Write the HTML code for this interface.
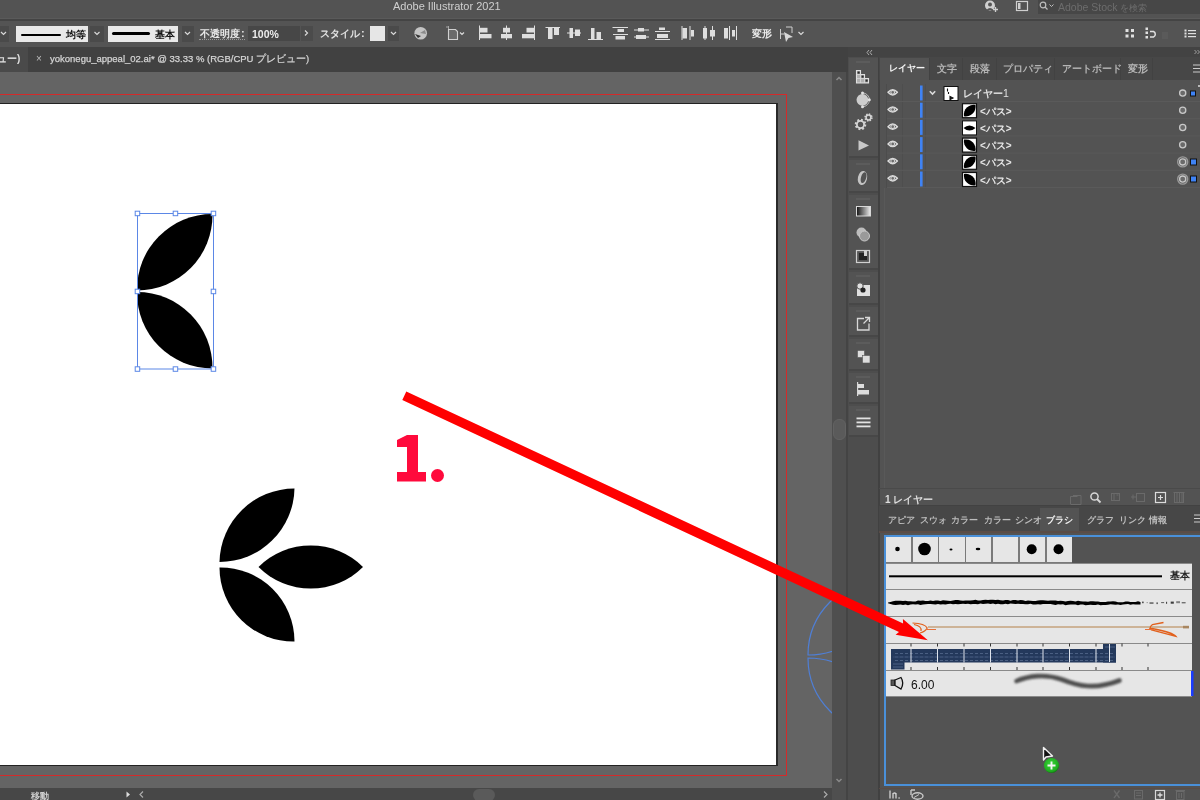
<!DOCTYPE html>
<html><head><meta charset="utf-8">
<style>
*{margin:0;padding:0;box-sizing:border-box}
html,body{width:1200px;height:800px;overflow:hidden;background:#535353;font-family:"Liberation Sans",sans-serif;}
.a{position:absolute}
.t{position:absolute;white-space:nowrap;color:#d6d6d6;font-size:10px;line-height:12px;will-change:transform}
</style></head><body>
<!-- title bar -->
<div class="a" style="left:0;top:0;width:1200px;height:19px;background:#535353;border-bottom:1px solid #5a5a5a"></div>
<div class="a" style="left:0;top:19px;width:1200px;height:2px;background:#444"></div>
<div class="t" style="left:393px;top:0px;font-size:11px;color:#cfcfcf">Adobe Illustrator 2021</div>
<!-- control bar -->
<div class="a" style="left:0;top:21px;width:1200px;height:26px;background:#545454"></div>

<!-- title right -->
<svg class="a" style="left:980px;top:0" width="60" height="18">
 <circle cx="10" cy="5.5" r="5" fill="#cfcfcf"/>
 <circle cx="10" cy="4.5" r="2" fill="#555"/>
 <path d="M6.5 10 Q10 6 13.5 10" fill="#555"/>
 <path d="M13 9.5h5M15.5 7v5" stroke="#cfcfcf" stroke-width="1.3"/>
 <rect x="36.5" y="1.5" width="11" height="9" fill="none" stroke="#cfcfcf" stroke-width="1.2"/>
 <rect x="38" y="3" width="2.5" height="6" fill="#cfcfcf"/>
</svg>
<div class="a" style="left:1038px;top:0;width:162px;height:14px;background:#474747"></div>
<svg class="a" style="left:1038px;top:0" width="20" height="14">
 <circle cx="5" cy="5" r="2.8" fill="none" stroke="#bdbdbd" stroke-width="1.2"/>
 <path d="M7 7l2.5 2.5" stroke="#bdbdbd" stroke-width="1.3"/>
 <path d="M11.5 4.5l2 2 2-2" fill="none" stroke="#bdbdbd" stroke-width="1"/>
</svg>
<div class="t" style="left:1058px;top:1px;font-size:10.5px;color:#6c6c6c">Adobe Stock <span style="font-size:9px">を検索</span></div>
<!-- control bar items -->
<div class="a" style="left:0;top:26px;width:9px;height:16px;background:#4a4a4a"></div>
<div class="a" style="left:16px;top:26px;width:72px;height:16px;background:#e9e9e9"></div>
<div class="a" style="left:21px;top:34px;width:40px;height:2.2px;background:#000;border-radius:1px"></div>
<div class="t" style="left:66px;top:29px;font-size:10px;font-weight:bold;color:#111">均等</div>
<div class="a" style="left:90px;top:26px;width:14px;height:16px;background:#4a4a4a"></div>
<div class="a" style="left:108px;top:26px;width:70px;height:16px;background:#e9e9e9"></div>
<div class="a" style="left:112px;top:32.2px;width:38px;height:3px;background:#000;border-radius:1.5px"></div>
<div class="t" style="left:155px;top:28.5px;font-size:10px;font-weight:bold;color:#111">基本</div>
<div class="a" style="left:182px;top:26px;width:12px;height:16px;background:#4a4a4a"></div>
<div class="t" style="left:199.5px;top:28px;font-size:9.7px;font-weight:bold;color:#e8e8e8;line-height:12px">不透明度</div><div class="a" style="left:199px;top:39px;width:46px;height:1px;border-top:1px dotted #999"></div><div class="t" style="left:240.5px;top:27px;font-size:11px;font-weight:bold;color:#e2e2e2">:</div>
<div class="a" style="left:248px;top:26px;width:52px;height:15px;background:#474747"></div>
<div class="t" style="left:252px;top:28px;font-size:10.5px;font-weight:bold;color:#ececec">100%</div>
<div class="a" style="left:301px;top:26px;width:12px;height:15px;background:#4b4b4b"></div>
<div class="t" style="left:320px;top:28px;font-size:9.7px;font-weight:bold;color:#e2e2e2">スタイル</div><div class="t" style="left:361px;top:27px;font-size:11px;font-weight:bold;color:#e2e2e2">:</div>
<div class="a" style="left:370px;top:26px;width:15px;height:15px;background:#e6e6e6"></div>
<div class="a" style="left:388px;top:26px;width:11px;height:15px;background:#4a4a4a"></div>
<div class="t" style="left:752px;top:28px;font-size:10px;font-weight:bold;color:#e8e8e8">変形</div>
<svg class="a" style="left:0;top:21px" width="1200" height="26">
 <g fill="none" stroke="#d8d8d8" stroke-width="1.2">
  <path d="M1 11l2.5 2.5 2.5-2.5"/>
  <path d="M94.5 11l2.5 2.5 2.5-2.5"/>
  <path d="M185 11l2.5 2.5 2.5-2.5"/>
  <path d="M305 9.5l2.5 2.5-2.5 2.5"/>
  <path d="M391 11l2.5 2.5 2.5-2.5"/>
  <path d="M460 11.5l2 2 2-2"/>
  <path d="M798.5 11l2.5 2.5 2.5-2.5"/>
 </g>
 <circle cx="420.7" cy="12.3" r="6.3" fill="#c4c4c4"/>
 <path d="M415 13 L418 17 L421 15 Z" fill="#333"/>
 <path d="M420 12 L425 9 L426 13Z" fill="#8a8a8a"/>
 <path d="M448.5 8.5h7l2 2v8h-9z" fill="#6a6a6a" stroke="#d0d0d0" stroke-width="1.1"/>
 <path d="M446 6h2M448.5 5v3" stroke="#bbb" stroke-width="0.8"/>
 <g fill="#dedede">
  <rect x="479" y="4.5" width="1" height="14.5"/><rect x="480" y="6.8" width="7.5" height="4.7"/><rect x="480" y="13" width="11.5" height="4.3"/>
  <rect x="506" y="4.5" width="1" height="14.5"/><rect x="503" y="6.8" width="7" height="4.7"/><rect x="501" y="13" width="11" height="4.3"/>
  <rect x="534" y="4.5" width="1" height="14.5"/><rect x="526.5" y="6.8" width="7.5" height="4.7"/><rect x="522" y="13" width="12" height="4.3"/>
  <rect x="545.5" y="6" width="14.5" height="1"/><rect x="548" y="7" width="4.5" height="11"/><rect x="554" y="7" width="5" height="7"/>
  <rect x="567" y="11.5" width="14" height="1"/><rect x="569.5" y="7" width="3.5" height="10"/><rect x="575" y="8.5" width="5" height="6.5"/>
  <rect x="588" y="18" width="15" height="1"/><rect x="591" y="7" width="3.5" height="11"/><rect x="596.5" y="11" width="4.5" height="7"/>
  <rect x="612.5" y="6" width="15.5" height="1"/><rect x="617.5" y="8" width="6.5" height="3"/><rect x="613" y="13" width="15" height="1"/><rect x="615.5" y="15" width="9.5" height="3.5"/>
  <rect x="634" y="8.5" width="15" height="1"/><rect x="638" y="7" width="6" height="3.5"/><rect x="634" y="15.5" width="15" height="1"/><rect x="636" y="14" width="10" height="4"/>
  <rect x="659" y="6.5" width="6" height="2.5"/><rect x="655" y="10" width="15" height="1"/><rect x="657" y="13" width="11" height="4"/><rect x="655" y="18" width="15" height="1"/>
  <rect x="681.5" y="5" width="1" height="14"/><rect x="682.5" y="7" width="4.5" height="10.5"/><rect x="689.5" y="5" width="1" height="14"/><rect x="691" y="9" width="3" height="6.5"/>
  <rect x="703" y="7" width="4" height="10.5"/><rect x="704.5" y="5" width="1" height="14"/><rect x="710" y="9" width="5" height="6.5"/><rect x="712" y="5" width="1" height="14"/>
  <rect x="724" y="7" width="4" height="10.5"/><rect x="729" y="5" width="1" height="14"/><rect x="732" y="9" width="3" height="6.5"/><rect x="736" y="5" width="1" height="14"/>
 </g>
 <path d="M780.5 8v10M780.5 13h4M786 6h6v6" fill="none" stroke="#cfcfcf" stroke-width="1"/>
 <path d="M784 11 L793 16 L788.5 17 L786 21 Z" fill="#d8d8d8"/>
 <g fill="#e0e0e0">
  <rect x="1125.5" y="8" width="3" height="3"/><rect x="1131" y="8" width="3" height="3"/><rect x="1125.5" y="13.5" width="3" height="3"/><rect x="1131" y="13.5" width="3" height="3"/>
  <rect x="1145.5" y="6.5" width="2.5" height="2.5"/><rect x="1145.5" y="10.5" width="2.5" height="2.5"/><rect x="1145.5" y="15" width="2.5" height="2.5"/>
  <rect x="1184.5" y="8.5" width="2" height="2"/><rect x="1184.5" y="11.5" width="2" height="2"/><rect x="1184.5" y="14.5" width="2" height="2"/>
  <rect x="1188" y="9" width="8" height="1.2"/><rect x="1188" y="12" width="8" height="1.2"/><rect x="1188" y="15" width="8" height="1.2"/>
 </g>
 <path d="M1150 10.5h3.5a3 3 0 0 1 0 5.5H1150" fill="none" stroke="#e0e0e0" stroke-width="1.5"/>
 <rect x="1162" y="11" width="6" height="7" fill="#5a5a5a"/>
</svg>

<!-- tab bar -->
<div class="a" style="left:0;top:47px;width:848px;height:25px;background:#414141"></div>
<div class="a" style="left:0;top:47px;width:28px;height:25px;background:#4a4a4a"></div>
<div class="t" style="left:-3px;top:53px;font-size:10px;font-weight:bold;color:#e0e0e0">ュー)</div>
<div class="t" style="left:36px;top:53px;color:#bdbdbd">×</div>
<div class="t" style="left:50px;top:53px;font-size:9.5px;color:#d4d4d4;-webkit-text-stroke:0.25px #d4d4d4">yokonegu_appeal_02.ai* @ 33.33 % (RGB/CPU プレビュー)</div>
<!-- canvas -->
<div class="a" style="left:0;top:72px;width:832px;height:716px;background:#646464"></div>
<div class="a" style="left:0;top:94px;width:787px;height:682px;border-right:1px solid #d42a2a;border-bottom:1px solid #d42a2a;border-top:1px solid #d42a2a"></div>
<div class="a" style="left:0;top:103px;width:778px;height:663px;background:#fff;border-top:1px solid #222;border-right:2px solid #2a2a2a;border-bottom:1px solid #222"></div>

<!-- artwork -->
<svg class="a" style="left:0;top:72px" width="832" height="716" viewBox="0 72 832 716">
 <g fill="#000">
  <path d="M137 290.5 A75.5 75.5 0 0 1 212.5 214 A75.5 75.5 0 0 1 137 290.5Z"/>
  <path d="M137 292 A75.5 75.5 0 0 0 212.5 368.5 A75.5 75.5 0 0 0 137 292Z"/>
  <path d="M219.5 562 A75 75 0 0 1 294.5 488.5 A75 75 0 0 1 219.5 562Z"/>
  <path d="M219.5 567.5 A74 74 0 0 0 294.5 641.5 A74 74 0 0 0 219.5 567.5Z"/>
  <path d="M258.5 567 A74 74 0 0 1 363 567 A74 74 0 0 1 258.5 567Z"/>
 </g>
 <g fill="none" stroke="#5b87e6" stroke-width="1">
  <rect x="137.5" y="213.5" width="76" height="155.5"/>
 </g>
 <g fill="#fff" stroke="#5b87e6" stroke-width="1">
  <rect x="135.2" y="211.2" width="4.5" height="4.5"/>
  <rect x="173.2" y="211.2" width="4.5" height="4.5"/>
  <rect x="211.2" y="211.2" width="4.5" height="4.5"/>
  <rect x="135.2" y="289.2" width="4.5" height="4.5"/>
  <rect x="211.2" y="289.2" width="4.5" height="4.5"/>
  <rect x="135.2" y="366.8" width="4.5" height="4.5"/>
  <rect x="173.2" y="366.8" width="4.5" height="4.5"/>
  <rect x="211.2" y="366.8" width="4.5" height="4.5"/>
 </g>
 <g fill="none" stroke="#4f7fd6" stroke-width="1.2">
  <path d="M808 655 A75 75 0 0 1 883 580 A75 75 0 0 1 808 655Z"/>
  <path d="M808 658 A75 75 0 0 0 883 733 A75 75 0 0 0 808 658Z"/>
 </g>
 <path d="M397 440 L407 435 L418 435 L418 472 L426 472 L426 481.5 L397 481.5 L397 472 L407 472 L407 447 L397 447 Z" fill="#ff0a3c"/>
 <circle cx="437.5" cy="475.5" r="6.5" fill="#ff0a3c"/>
</svg>

<!-- status bar -->
<div class="a" style="left:0;top:788px;width:832px;height:12px;background:#474747"></div>
<div class="t" style="left:31px;top:790px;font-size:9px;font-weight:bold;color:#cfcfcf">移動</div>
<div class="a" style="left:473px;top:789px;width:22px;height:12px;background:#5a5a5a;border-radius:6px"></div>
<svg class="a" style="left:120px;top:788px" width="728" height="12"><path d="M6.5 3.5 L10 6.5 L6.5 9.5Z" fill="#ddd"/><path d="M23 3.5 L20 6.5 L23 9.5" fill="none" stroke="#aaa" stroke-width="1.2"/><path d="M704 3.5 L707 6.5 L704 9.5" fill="none" stroke="#aaa" stroke-width="1.2"/></svg>
<!-- v scrollbar -->
<div class="a" style="left:832px;top:72px;width:15px;height:728px;background:#4f4f4f"></div>
<div class="a" style="left:846px;top:72px;width:2px;height:728px;background:#444"></div>
<div class="a" style="left:833px;top:419px;width:13px;height:21px;background:#5a5a5a;border-radius:6px;border:1px solid #626262"></div>
<svg class="a" style="left:832px;top:72px" width="15" height="716"><path d="M4.5 8 L7 5.5 L9.5 8" fill="none" stroke="#8a8a8a" stroke-width="1.5"/><path d="M4.5 707 L7 709.5 L9.5 707" fill="none" stroke="#8a8a8a" stroke-width="1.5"/></svg>
<!-- dock -->
<div class="a" style="left:848px;top:47px;width:352px;height:10px;background:#434343"></div><svg class="a" style="left:862px;top:48px" width="14" height="9"><path d="M7 2 L5 4.5 L7 7M10 2 L8 4.5 L10 7" fill="none" stroke="#aaa" stroke-width="1"/></svg>
<div class="a" style="left:879px;top:57px;width:321px;height:743px;background:#535353"></div>
<!-- tool column -->
<div class="a" style="left:848px;top:57px;width:31px;height:743px;background:#4d4d4d"></div>
<div class="a" style="left:849px;top:58px;width:29px;height:100px;background:#535353;border-bottom:2px solid #474747"></div>
<div class="a" style="left:856px;top:61px;width:14px;height:2px;background:#5c5c5c"></div>
<div class="a" style="left:849px;top:160px;width:29px;height:33px;background:#535353;border-bottom:2px solid #474747"></div>
<div class="a" style="left:856px;top:163px;width:14px;height:2px;background:#5c5c5c"></div>
<div class="a" style="left:849px;top:195px;width:29px;height:75px;background:#535353;border-bottom:2px solid #474747"></div>
<div class="a" style="left:856px;top:198px;width:14px;height:2px;background:#5c5c5c"></div>
<div class="a" style="left:849px;top:272px;width:29px;height:33px;background:#535353;border-bottom:2px solid #474747"></div>
<div class="a" style="left:856px;top:275px;width:14px;height:2px;background:#5c5c5c"></div>
<div class="a" style="left:849px;top:307px;width:29px;height:30px;background:#535353;border-bottom:2px solid #474747"></div>
<div class="a" style="left:856px;top:310px;width:14px;height:2px;background:#5c5c5c"></div>
<div class="a" style="left:849px;top:339px;width:29px;height:32px;background:#535353;border-bottom:2px solid #474747"></div>
<div class="a" style="left:856px;top:342px;width:14px;height:2px;background:#5c5c5c"></div>
<div class="a" style="left:849px;top:373px;width:29px;height:31px;background:#535353;border-bottom:2px solid #474747"></div>
<div class="a" style="left:856px;top:376px;width:14px;height:2px;background:#5c5c5c"></div>
<div class="a" style="left:849px;top:406px;width:29px;height:31px;background:#535353;border-bottom:2px solid #474747"></div>
<div class="a" style="left:856px;top:409px;width:14px;height:2px;background:#5c5c5c"></div>
<div class="a" style="left:878px;top:57px;width:2px;height:743px;background:#414141"></div><div class="a" style="left:884px;top:188px;width:1px;height:300px;background:#595959"></div>
<svg class="a" style="left:848px;top:57px" width="31" height="400" viewBox="848 57 31 400">
 <path d="M856.5 70.5h4v4h4v4h4v4.5h-12z" fill="#b0b0b0" stroke="#e0e0e0" stroke-width="1.1"/>
 <path d="M856.5 74.5h4M856.5 78.5h8M860.5 74.5v8.5M864.5 78.5v4.5" fill="none" stroke="#d8d8d8" stroke-width="0.8"/>
 <g fill="#2a2a2a"><rect x="857.5" y="71.5" width="2.2" height="2.2"/><rect x="861.5" y="75.5" width="2.2" height="2.2"/><rect x="865.5" y="79.5" width="2.2" height="2.2"/></g>
 <circle cx="862.4" cy="99.8" r="5.9" fill="#cdcdcd"/>
 <path d="M862.5 92.9 A6.9 6.9 0 0 1 862.5 106.7" fill="none" stroke="#bdbdbd" stroke-width="1"/>
 <circle cx="862.5" cy="92.9" r="1.5" fill="#e0e0e0"/><circle cx="869.3" cy="99.8" r="1.5" fill="#e0e0e0"/><circle cx="862.5" cy="106.7" r="1.5" fill="#e0e0e0"/>
 <circle cx="860.5" cy="124.5" r="4.6" fill="none" stroke="#d4d4d4" stroke-width="2.4" stroke-dasharray="1.8 1.8"/>
 <circle cx="860.5" cy="124.5" r="3.6" fill="none" stroke="#d4d4d4" stroke-width="1.8"/>
 <circle cx="868.5" cy="117.5" r="3.2" fill="none" stroke="#d4d4d4" stroke-width="2" stroke-dasharray="1.4 1.1"/>
 <circle cx="868.5" cy="117.5" r="2.4" fill="none" stroke="#d4d4d4" stroke-width="1.5"/>
 <path d="M858.5 140.3 L869 145.4 L858.5 150.5Z" fill="#c8c8c8"/>
 <ellipse cx="862.5" cy="178" rx="4.6" ry="7.2" fill="#c4c4c4" transform="rotate(12 862.5 178)"/><ellipse cx="863.6" cy="177.6" rx="2.6" ry="5.6" fill="#535353" transform="rotate(16 863.6 177.6)"/>
 <defs><linearGradient id="gr" x1="0" x2="1"><stop offset="0" stop-color="#111"/><stop offset="1" stop-color="#eee"/></linearGradient></defs>
 <rect x="856.5" y="206.5" width="14" height="9.5" fill="url(#gr)" stroke="#d8d8d8" stroke-width="1"/>
 <circle cx="861.5" cy="232.5" r="5" fill="#bdbdbd"/><circle cx="864.5" cy="236" r="5" fill="#9a9a9a" stroke="#c8c8c8" stroke-width="1"/>
 <rect x="856.5" y="250.5" width="13" height="12" fill="#555" stroke="#d0d0d0" stroke-width="1.2"/>
 <rect x="859" y="253" width="8" height="7" fill="#222"/><rect x="864" y="251" width="3" height="5" fill="#d0d0d0"/>
 <rect x="857" y="285" width="13" height="11" fill="#e0e0e0"/>
 <circle cx="860" cy="286" r="3.2" fill="#e0e0e0" stroke="#505050" stroke-width="1"/>
 <circle cx="863" cy="290" r="2.6" fill="#222"/>
 <path d="M864 318.5h-6.5v11.5h11.5v-6.5M863.5 323.5l5.5-5.5M865 317.5h4.5v4.5" fill="none" stroke="#d8d8d8" stroke-width="1.3"/>
 <rect x="857.5" y="350.5" width="7" height="7" fill="#ddd" stroke="#555" stroke-width="0.6"/>
 <rect x="862.5" y="355.5" width="7.5" height="7.5" fill="#ddd" stroke="#555" stroke-width="0.6"/>
 <rect x="857" y="382" width="1.2" height="14" fill="#d8d8d8"/><rect x="858" y="384" width="6" height="4" fill="#ddd"/><rect x="858" y="390" width="11" height="4.5" fill="#ddd"/>
 <rect x="856.5" y="417.5" width="14" height="1.8" fill="#e2e2e2"/><rect x="856.5" y="421.5" width="14" height="1.8" fill="#e2e2e2"/><rect x="856.5" y="425.5" width="14" height="1.8" fill="#e2e2e2"/>
</svg>
<!-- layers panel -->
<div class="a" style="left:879px;top:57px;width:321px;height:23px;background:#474747"></div>
<div class="a" style="left:880px;top:58px;width:49px;height:22px;background:#535353"></div>
<div class="a" style="left:929px;top:58px;width:1px;height:22px;background:#424242"></div>
<div class="a" style="left:962px;top:58px;width:1px;height:22px;background:#424242"></div>
<div class="a" style="left:996px;top:58px;width:1px;height:22px;background:#424242"></div>
<div class="a" style="left:1054px;top:58px;width:1px;height:22px;background:#424242"></div>
<div class="a" style="left:1120px;top:58px;width:1px;height:22px;background:#424242"></div>
<div class="a" style="left:1152px;top:58px;width:1px;height:22px;background:#424242"></div>
<div class="t" style="left:888.5px;top:62px;font-size:9px;font-weight:bold;color:#f4f4f4">レイヤー</div>
<div class="t" style="left:937px;top:62.5px;font-size:9.5px;font-weight:bold;color:#b4b4b4">文字</div>
<div class="t" style="left:970px;top:62.5px;font-size:9.5px;font-weight:bold;color:#b4b4b4">段落</div>
<div class="t" style="left:1003px;top:62.5px;font-size:9.5px;font-weight:bold;color:#b4b4b4">プロパティ</div>
<div class="t" style="left:1062px;top:62.5px;font-size:9.5px;font-weight:bold;color:#b4b4b4">アートボード</div>
<div class="t" style="left:1128px;top:62.5px;font-size:9.5px;font-weight:bold;color:#b4b4b4">変形</div>
<svg class="a" style="left:1180px;top:44px" width="20" height="36"><path d="M14.5 6l2 2-2 2M17.5 6l2 2-2 2" fill="none" stroke="#a0a0a0" stroke-width="1"/><path d="M13 21h7M13 24.5h7M13 28h7" stroke="#ccc" stroke-width="1.2"/></svg>
<div class="a" style="left:886px;top:84px;width:1px;height:104px;background:#4c4c4c"></div>
<div class="a" style="left:902px;top:84px;width:1px;height:104px;background:#4e4e4e"></div>
<div class="a" style="left:925px;top:84px;width:1px;height:104px;background:#4e4e4e"></div>
<svg class="a" style="left:879px;top:80px" width="321" height="112" viewBox="879 80 321 112">
<line x1="887" x2="1200" y1="101.5" y2="101.5" stroke="#5a5a5a" stroke-width="1"/>
<path d="M888 92.3 Q892.7 87.1 897.4 92.3 Q892.7 97.5 888 92.3Z" fill="none" stroke="#dcdcdc" stroke-width="1.5" stroke-linejoin="round"/>
<circle cx="892.7" cy="92.3" r="1.9" fill="#6a6a6a" stroke="#d4d4d4" stroke-width="1.1"/>
<rect x="920" y="85.5" width="2.6" height="15" fill="#3f83f5"/>
<circle cx="1182.7" cy="93.1" r="3.1" fill="#6a6a6a" stroke="#c8c8c8" stroke-width="1.3"/>
<line x1="887" x2="1200" y1="118.7" y2="118.7" stroke="#5a5a5a" stroke-width="1"/>
<path d="M888 109.5 Q892.7 104.3 897.4 109.5 Q892.7 114.7 888 109.5Z" fill="none" stroke="#dcdcdc" stroke-width="1.5" stroke-linejoin="round"/>
<circle cx="892.7" cy="109.5" r="1.9" fill="#6a6a6a" stroke="#d4d4d4" stroke-width="1.1"/>
<rect x="920" y="102.7" width="2.6" height="15" fill="#3f83f5"/>
<circle cx="1182.7" cy="110.3" r="3.1" fill="#6a6a6a" stroke="#c8c8c8" stroke-width="1.3"/>
<line x1="887" x2="1200" y1="135.9" y2="135.9" stroke="#5a5a5a" stroke-width="1"/>
<path d="M888 126.7 Q892.7 121.5 897.4 126.7 Q892.7 131.9 888 126.7Z" fill="none" stroke="#dcdcdc" stroke-width="1.5" stroke-linejoin="round"/>
<circle cx="892.7" cy="126.7" r="1.9" fill="#6a6a6a" stroke="#d4d4d4" stroke-width="1.1"/>
<rect x="920" y="119.9" width="2.6" height="15" fill="#3f83f5"/>
<circle cx="1182.7" cy="127.5" r="3.1" fill="#6a6a6a" stroke="#c8c8c8" stroke-width="1.3"/>
<line x1="887" x2="1200" y1="153.1" y2="153.1" stroke="#5a5a5a" stroke-width="1"/>
<path d="M888 143.9 Q892.7 138.7 897.4 143.9 Q892.7 149.1 888 143.9Z" fill="none" stroke="#dcdcdc" stroke-width="1.5" stroke-linejoin="round"/>
<circle cx="892.7" cy="143.9" r="1.9" fill="#6a6a6a" stroke="#d4d4d4" stroke-width="1.1"/>
<rect x="920" y="137.1" width="2.6" height="15" fill="#3f83f5"/>
<circle cx="1182.7" cy="144.7" r="3.1" fill="#6a6a6a" stroke="#c8c8c8" stroke-width="1.3"/>
<line x1="887" x2="1200" y1="170.3" y2="170.3" stroke="#5a5a5a" stroke-width="1"/>
<path d="M888 161.1 Q892.7 155.9 897.4 161.1 Q892.7 166.3 888 161.1Z" fill="none" stroke="#dcdcdc" stroke-width="1.5" stroke-linejoin="round"/>
<circle cx="892.7" cy="161.1" r="1.9" fill="#6a6a6a" stroke="#d4d4d4" stroke-width="1.1"/>
<rect x="920" y="154.3" width="2.6" height="15" fill="#3f83f5"/>
<circle cx="1182.7" cy="161.9" r="3.1" fill="#6a6a6a" stroke="#c8c8c8" stroke-width="1.3"/>
<circle cx="1182.7" cy="161.9" r="5" fill="none" stroke="#9a9a9a" stroke-width="1.4"/>
<line x1="887" x2="1200" y1="187.5" y2="187.5" stroke="#5a5a5a" stroke-width="1"/>
<path d="M888 178.3 Q892.7 173.1 897.4 178.3 Q892.7 183.5 888 178.3Z" fill="none" stroke="#dcdcdc" stroke-width="1.5" stroke-linejoin="round"/>
<circle cx="892.7" cy="178.3" r="1.9" fill="#6a6a6a" stroke="#d4d4d4" stroke-width="1.1"/>
<rect x="920" y="171.5" width="2.6" height="15" fill="#3f83f5"/>
<circle cx="1182.7" cy="179.1" r="3.1" fill="#6a6a6a" stroke="#c8c8c8" stroke-width="1.3"/>
<circle cx="1182.7" cy="179.1" r="5" fill="none" stroke="#9a9a9a" stroke-width="1.4"/>
<path d="M929.8 91.3l2.7 2.7 2.7-2.7" fill="none" stroke="#dadada" stroke-width="1.6"/>
<rect x="944" y="86.5" width="14" height="14" fill="#fff" stroke="#111" stroke-width="1"/>
<path d="M947.5 88.5v3M948.5 92v2M950 96.5l3 1.5-3 1.5z" stroke="#111" stroke-width="1.1" fill="#111"/>
<rect x="1190.5" y="91" width="5" height="5" fill="#3f83f5" stroke="#111" stroke-width="1"/>
<rect x="1190.5" y="159" width="6" height="6" fill="#3f83f5" stroke="#111" stroke-width="1"/>
<rect x="1190.5" y="176" width="6" height="6" fill="#3f83f5" stroke="#111" stroke-width="1"/>
<circle cx="1199" cy="86" r="1" fill="#ddd"/>
<g transform="translate(0 17.2)"><rect x="962.5" y="86.5" width="14" height="14" fill="#fff" stroke="#111" stroke-width="1.2"/><path d="M964 99 A9.8 9.8 0 0 1 975.5 87.8 A9.8 9.8 0 0 1 964 99Z" fill="#000"/></g>
<g transform="translate(0 34.4)"><rect x="962.5" y="86.5" width="14" height="14" fill="#fff" stroke="#111" stroke-width="1"/><path d="M963.5 93.5 Q969.5 88.5 975.5 93.5 Q969.5 98.5 963.5 93.5Z" fill="#000"/></g>
<g transform="translate(0 51.6)"><rect x="962.5" y="86.5" width="14" height="14" fill="#fff" stroke="#111" stroke-width="1.2"/><path d="M964 88 A9.8 9.8 0 0 0 975.5 99.2 A9.8 9.8 0 0 0 964 88Z" fill="#000"/></g>
<g transform="translate(0 68.8)"><rect x="962.5" y="86.5" width="14" height="14" fill="#fff" stroke="#111" stroke-width="1.2"/><path d="M964 99 A9.8 9.8 0 0 1 975.5 87.8 A9.8 9.8 0 0 1 964 99Z" fill="#000"/></g>
<g transform="translate(0 86.0)"><rect x="962.5" y="86.5" width="14" height="14" fill="#fff" stroke="#111" stroke-width="1.2"/><path d="M964 88 A9.8 9.8 0 0 0 975.5 99.2 A9.8 9.8 0 0 0 964 88Z" fill="#000"/></g>
</svg>
<div class="t" style="left:962.5px;top:88px;font-size:9.5px;font-weight:bold;color:#e0e0e0">レイヤー</div><div class="t" style="left:1003px;top:87px;font-size:10.5px;color:#e0e0e0">1</div>
<div class="t" style="left:980px;top:105.7px;font-size:10px;font-weight:bold;color:#e6e6e6">&lt;パス&gt;</div>
<div class="t" style="left:980px;top:122.9px;font-size:10px;font-weight:bold;color:#e6e6e6">&lt;パス&gt;</div>
<div class="t" style="left:980px;top:140.1px;font-size:10px;font-weight:bold;color:#e6e6e6">&lt;パス&gt;</div>
<div class="t" style="left:980px;top:157.3px;font-size:10px;font-weight:bold;color:#e6e6e6">&lt;パス&gt;</div>
<div class="t" style="left:980px;top:174.5px;font-size:10px;font-weight:bold;color:#e6e6e6">&lt;パス&gt;</div>
<!-- layers footer -->
<div class="a" style="left:879px;top:488px;width:321px;height:1px;background:#4a4a4a"></div>
<div class="t" style="left:884.5px;top:493.5px;font-size:10px;font-weight:bold;color:#dcdcdc">1&nbsp;レイヤー</div>
<svg class="a" style="left:1060px;top:486.5px" width="140" height="19">
 <g fill="none" stroke="#6a6a6a" stroke-width="1">
  <path d="M1070.5 505.5v-8h7M1073 496.5h8v9h-10" transform="translate(-1060 -488)"/>
  <rect x="51.5" y="6.5" width="8" height="7"/><path d="M54 6.5v7M56.5 8h2"/>
  <path d="M71 10h6M73 7.5v5"/><rect x="76.5" y="6.5" width="8" height="8"/>
  <rect x="114.5" y="5.5" width="9" height="10"/><path d="M117 5.5v10M119.5 5.5v10M122 5.5v10M113.5 5.5h11"/>
 </g>
 <circle cx="34.5" cy="9.5" r="3.6" fill="none" stroke="#d8d8d8" stroke-width="1.5"/>
 <path d="M37 12l3.5 3.5" stroke="#d8d8d8" stroke-width="1.8"/>
 <rect x="95.5" y="5.5" width="10" height="10" fill="none" stroke="#dcdcdc" stroke-width="1.2"/>
 <path d="M98 10.5h5M100.5 8v5" stroke="#dcdcdc" stroke-width="1.2"/>
</svg>
<!-- brushes panel tabs -->
<div class="a" style="left:879px;top:505px;width:321px;height:26px;background:#474747;border-top:1px solid #424242"></div>
<div class="a" style="left:1040px;top:508px;width:39px;height:23px;background:#535353"></div>
<div class="a" style="left:879px;top:531px;width:321px;height:2px;background:#5a4c46"></div>
<div class="t" style="left:888px;top:513.5px;font-size:8.6px;font-weight:bold;color:#bcbcbc">アピア</div>
<div class="t" style="left:920px;top:513.5px;font-size:8.6px;font-weight:bold;color:#bcbcbc">スウォ</div>
<div class="t" style="left:951px;top:513.5px;font-size:8.6px;font-weight:bold;color:#bcbcbc">カラー</div>
<div class="t" style="left:984px;top:513.5px;font-size:8.6px;font-weight:bold;color:#bcbcbc">カラー</div>
<div class="t" style="left:1015px;top:513.5px;font-size:8.6px;font-weight:bold;color:#bcbcbc">シンオ</div>
<div class="t" style="left:1087px;top:513.5px;font-size:8.6px;font-weight:bold;color:#bcbcbc">グラフ</div>
<div class="t" style="left:1119px;top:513.5px;font-size:8.6px;font-weight:bold;color:#bcbcbc">リンク</div>
<div class="t" style="left:1149px;top:513.5px;font-size:8.6px;font-weight:bold;color:#bcbcbc">情報</div>
<div class="t" style="left:1046px;top:513.5px;font-size:8.6px;font-weight:bold;color:#f4f4f4">ブラシ</div>
<svg class="a" style="left:1190px;top:510px" width="10" height="20"><path d="M4 5h6M4 8.5h6M4 12h6" stroke="#ccc" stroke-width="1.2"/></svg>
<!-- brushes content -->
<div class="a" style="left:884px;top:535px;width:316px;height:251px;border:2px solid #4a90d9;border-right:none;background:#535353"></div>
<div class="a" style="left:886px;top:537px;width:186px;height:27px;background:#7a7a7a"></div>
<div class="a" style="left:886.0px;top:537px;width:25.0px;height:25px;background:#e6e6e6"></div>
<div class="a" style="left:912.5px;top:537px;width:25.0px;height:25px;background:#e6e6e6"></div>
<div class="a" style="left:939.0px;top:537px;width:25.5px;height:25px;background:#e6e6e6"></div>
<div class="a" style="left:966.0px;top:537px;width:25.0px;height:25px;background:#e6e6e6"></div>
<div class="a" style="left:992.5px;top:537px;width:25.5px;height:25px;background:#e6e6e6"></div>
<div class="a" style="left:1019.5px;top:537px;width:25.5px;height:25px;background:#e6e6e6"></div>
<div class="a" style="left:1046.5px;top:537px;width:25.5px;height:25px;background:#e6e6e6"></div>
<svg class="a" style="left:886px;top:537px" width="314" height="160" viewBox="886 537 314 160">
 <circle cx="897.5" cy="549" r="2.3" fill="#000"/>
 <circle cx="924.5" cy="549" r="6.3" fill="#000"/>
 <ellipse cx="951" cy="549.5" rx="1.5" ry="1" fill="#000"/>
 <ellipse cx="978" cy="549" rx="2.3" ry="1.3" fill="#000"/>
 <circle cx="1031.7" cy="549.2" r="5" fill="#000"/>
 <circle cx="1058.5" cy="549.2" r="5" fill="#000"/>
</svg>
<div class="a" style="left:886px;top:563px;width:306px;height:134px;background:#8a8a8a"></div>
<div class="a" style="left:886px;top:564px;width:306px;height:25px;background:#e6e6e6"></div>
<div class="a" style="left:886px;top:590px;width:306px;height:26px;background:#e6e6e6"></div>
<div class="a" style="left:886px;top:617px;width:306px;height:26px;background:#e6e6e6"></div>
<div class="a" style="left:886px;top:644px;width:306px;height:26px;background:#e6e6e6"></div>
<div class="a" style="left:886px;top:671px;width:306px;height:25px;background:#e6e6e6"></div>
<svg class="a" style="left:886px;top:563px" width="310" height="135" viewBox="886 563 310 135">
 <rect x="889" y="575.3" width="273" height="2" fill="#000"/>
 <path d="M888.0 602.6 L890.5 602.0 L893.0 601.3 L895.5 600.8 L898.0 600.8 L900.5 600.8 L903.0 601.1 L905.5 600.8 L908.0 601.3 L910.5 601.2 L913.0 601.5 L915.5 601.4 L918.0 600.6 L920.5 600.8 L923.0 600.6 L925.5 601.0 L928.0 600.9 L930.5 600.4 L933.0 600.9 L935.5 600.5 L938.0 600.6 L940.5 600.9 L943.0 600.3 L945.5 600.6 L948.0 600.7 L950.5 601.0 L953.0 600.4 L955.5 600.1 L958.0 599.9 L960.5 600.6 L963.0 600.7 L965.5 600.5 L968.0 600.4 L970.5 600.6 L973.0 600.2 L975.5 599.8 L978.0 600.4 L980.5 600.5 L983.0 600.1 L985.5 599.7 L988.0 599.9 L990.5 599.8 L993.0 599.8 L995.5 600.1 L998.0 599.8 L1000.5 600.3 L1003.0 600.6 L1005.5 600.0 L1008.0 600.1 L1010.5 600.8 L1013.0 600.0 L1015.5 600.1 L1018.0 600.5 L1020.5 599.9 L1023.0 600.3 L1025.5 600.9 L1028.0 600.5 L1030.5 600.7 L1033.0 601.0 L1035.5 601.0 L1038.0 600.6 L1040.5 600.3 L1043.0 600.3 L1045.5 600.5 L1048.0 600.7 L1050.5 600.4 L1053.0 600.5 L1055.5 600.5 L1058.0 601.1 L1060.5 600.8 L1063.0 600.9 L1065.5 601.4 L1068.0 601.1 L1070.5 600.8 L1073.0 601.0 L1075.5 601.6 L1078.0 600.8 L1080.5 601.3 L1083.0 601.4 L1085.5 601.4 L1088.0 601.8 L1090.5 601.2 L1093.0 601.2 L1095.5 601.6 L1098.0 601.4 L1100.5 601.9 L1103.0 602.0 L1105.5 602.0 L1108.0 601.4 L1110.5 601.5 L1113.0 601.2 L1115.5 601.5 L1118.0 602.2 L1120.5 602.2 L1123.0 602.2 L1125.5 601.5 L1128.0 601.4 L1130.5 601.9 L1133.0 602.1 L1135.5 601.9 L1138.0 601.3 L1140.5 602.1 L1140.5 604.4 L1138.0 604.4 L1135.5 604.6 L1133.0 604.3 L1130.5 604.8 L1128.0 604.1 L1125.5 604.2 L1123.0 604.4 L1120.5 605.0 L1118.0 604.5 L1115.5 604.8 L1113.0 604.4 L1110.5 604.2 L1108.0 604.7 L1105.5 605.0 L1103.0 605.1 L1100.5 605.3 L1098.0 604.5 L1095.5 605.1 L1093.0 605.1 L1090.5 604.7 L1088.0 605.1 L1085.5 605.3 L1083.0 604.4 L1080.5 604.5 L1078.0 605.3 L1075.5 604.5 L1073.0 604.6 L1070.5 604.4 L1068.0 604.7 L1065.5 605.2 L1063.0 604.3 L1060.5 604.5 L1058.0 604.2 L1055.5 604.9 L1053.0 604.4 L1050.5 604.1 L1048.0 604.0 L1045.5 604.1 L1043.0 603.9 L1040.5 604.4 L1038.0 604.2 L1035.5 604.5 L1033.0 604.5 L1030.5 603.7 L1028.0 604.2 L1025.5 604.3 L1023.0 604.1 L1020.5 603.9 L1018.0 603.7 L1015.5 603.9 L1013.0 603.7 L1010.5 603.6 L1008.0 604.3 L1005.5 603.8 L1003.0 604.2 L1000.5 604.2 L998.0 603.8 L995.5 604.2 L993.0 603.6 L990.5 604.1 L988.0 603.4 L985.5 603.8 L983.0 604.0 L980.5 603.6 L978.0 604.3 L975.5 604.0 L973.0 604.0 L970.5 604.3 L968.0 603.8 L965.5 604.0 L963.0 603.7 L960.5 604.0 L958.0 604.2 L955.5 604.0 L953.0 604.3 L950.5 603.7 L948.0 603.9 L945.5 604.5 L943.0 604.3 L940.5 604.4 L938.0 604.1 L935.5 604.4 L933.0 604.3 L930.5 604.1 L928.0 604.0 L925.5 604.3 L923.0 604.6 L920.5 604.9 L918.0 604.2 L915.5 604.4 L913.0 604.2 L910.5 604.6 L908.0 605.2 L905.5 604.5 L903.0 605.1 L900.5 604.4 L898.0 604.8 L895.5 604.9 L893.0 604.8 L890.5 604.0 L888.0 603.2Z" fill="#000"/><rect x="1142.0" y="601.6" width="1.7" height="1.6" fill="#111" opacity="0.70"/><rect x="1146.6" y="602.3" width="1.2" height="0.8" fill="#111" opacity="0.53"/><rect x="1149.5" y="602.3" width="4.0" height="1.5" fill="#111" opacity="0.64"/><rect x="1156.4" y="602.4" width="1.5" height="1.7" fill="#111" opacity="0.66"/><rect x="1161.1" y="602.2" width="3.0" height="0.9" fill="#111" opacity="0.70"/><rect x="1166.0" y="601.8" width="1.1" height="2.0" fill="#111" opacity="0.76"/><rect x="1170.7" y="601.6" width="3.1" height="2.1" fill="#111" opacity="0.80"/><rect x="1176.2" y="601.2" width="3.8" height="2.0" fill="#111" opacity="0.47"/><rect x="1181.7" y="602.0" width="3.9" height="1.4" fill="#111" opacity="0.55"/>
 <line x1="928" y1="627" x2="1186" y2="627" stroke="#c4a27c" stroke-width="1.7"/>
 <rect x="1183" y="625.8" width="6" height="2.6" fill="#a88660"/>
 <path d="M912.5 623 Q925 623.5 927.2 628 Q925.5 631.5 920 633 M914 624.5 Q922 626 921 631" fill="none" stroke="#e2601c" stroke-width="1.2"/>
 <path d="M926 629.5h10" stroke="#e8703a" stroke-width="1"/>
 <path d="M1163.5 622.5 L1152.5 624.5 Q1148.5 627.5 1151.5 630 L1176 636.5 Q1173 632.5 1152 628.5 L1149 628.8" fill="none" stroke="#e2601c" stroke-width="1.3"/>
 <path d="M1145 629.5h8" stroke="#e8703a" stroke-width="1"/>
 <g>
  <rect x="891" y="649" width="225" height="13.5" fill="#24395c"/>
  <rect x="891" y="649" width="13.5" height="20.5" fill="#24395c"/>
  <rect x="1103" y="644" width="13" height="18.5" fill="#24395c"/>
  <g stroke="#6c80a4" stroke-width="0.7" opacity="0.8"><path d="M893 653.5h222M893 657h222M893 660.5h222M893 664h10M893 667h10M1105 647h10"/></g>
  <g stroke="#24395c" stroke-width="1.2" stroke-dasharray="2 3"><path d="M893 653.5h222M893 657h222M893 660.5h222"/></g>
  <g stroke="#dfe4ec" stroke-width="1"><path d="M911 649v13.5M937.5 649v13.5M964 649v13.5M990.5 649v13.5M1017 649v13.5M1043 649v13.5M1069.5 649v13.5M1096 649v13.5M1109.5 644v18"/></g>
  <g stroke="#333" stroke-width="1"><path d="M911 643.5v3M937.5 643.5v3M964 643.5v3M990.5 643.5v3M1017 643.5v3M1043 643.5v3M1069.5 643.5v3M1096 643.5v3M1122 643.5v3M1148 643.5v3"/>
  <path d="M911 667v3M937.5 667v3M964 667v3M990.5 667v3M1017 667v3M1043 667v3M1069.5 667v3M1096 667v3M1122 667v3M1148 667v3"/></g>
 </g>
 <rect x="891" y="680" width="4" height="5.5" fill="#555" stroke="#222" stroke-width="0.8"/><path d="M895 680 L901 677.5 Q904.5 683 901 689 L895 685.5Z" fill="#ddd" stroke="#111" stroke-width="1.3"/>
 <defs><filter id="bl" x="-20%" y="-50%" width="140%" height="200%"><feGaussianBlur stdDeviation="1.3"/></filter></defs>
 <path d="M1016.5 681 C1028 676 1045 673.5 1062 679.5 C1078 686 1095 690 1119.5 680.5" fill="none" stroke="#505050" stroke-width="4.6" filter="url(#bl)" stroke-linecap="round"/>
 <rect x="1191" y="671" width="2.5" height="25" fill="#1a3cff"/>
</svg>
<div class="t" style="left:1170px;top:570px;font-size:10px;font-weight:bold;color:#222">基本</div>
<div class="t" style="left:910.5px;top:678.5px;font-size:12px;color:#111">6.00</div>
<div class="a" style="left:879px;top:788px;width:321px;height:1px;background:#5a4c46"></div>
<svg class="a" style="left:879px;top:786px" width="321" height="14">
 <path d="M11 4.5v8M14 7v5.5M17 7v5.5M14 7.5q3-1.5 3 1.5M19.5 12h1.2" fill="none" stroke="#d4d4d4" stroke-width="1.3"/>
 <path d="M32 4v5M32 4h4" fill="none" stroke="#c8c8c8" stroke-width="1.4"/>
 <ellipse cx="38.5" cy="10" rx="5.5" ry="3.2" fill="none" stroke="#c8c8c8" stroke-width="1.4"/>
 <path d="M35 11.5l5-3" stroke="#c8c8c8" stroke-width="1"/>
 <path d="M235 4.5l5.5 7.5M240.5 4.5l-5.5 7.5" stroke="#6a6a6a" stroke-width="1.3"/>
 <rect x="255.5" y="4.5" width="8" height="8.5" fill="none" stroke="#6a6a6a"/><path d="M257 7h5M257 9.5h5" stroke="#6a6a6a"/>
 <rect x="276.5" y="4.5" width="9" height="9" fill="none" stroke="#d8d8d8" stroke-width="1.2"/>
 <path d="M278.5 9h5M281 6.5v5" stroke="#e0e0e0" stroke-width="1.3"/>
 <rect x="297.5" y="5.5" width="7.5" height="8" fill="none" stroke="#6a6a6a"/><path d="M296.5 4.5h9.5M300 7v5M302.5 7v5" stroke="#6a6a6a"/>
</svg>
<svg class="a" style="left:1030px;top:740px" width="40" height="40">
 <path d="M13.5 7.5 L22.5 16 L16 17 L13.5 20Z" fill="#111" stroke="#f0f0f0" stroke-width="1.4" stroke-linejoin="round"/>
 <defs><radialGradient id="gg" cx="0.45" cy="0.4" r="0.65"><stop offset="0" stop-color="#3ad43a"/><stop offset="0.75" stop-color="#1fae1f"/><stop offset="1" stop-color="#0b5e0b"/></radialGradient></defs>
 <circle cx="21.5" cy="25.5" r="7.6" fill="url(#gg)"/>
 <path d="M17.5 25.5h8M21.5 21.5v8" stroke="#f4f4f4" stroke-width="1.9"/>
</svg>
<!-- arrow overlay -->
<svg class="a" style="left:0;top:0" width="1200" height="800"><path d="M406.3 391.4 L903.1 623.4 L902.9 619.1 L927.8 640.2 L895.6 634.7 L899.0 632.1 L402.3 400.0Z" fill="#ff0000"/></svg>
</body></html>
